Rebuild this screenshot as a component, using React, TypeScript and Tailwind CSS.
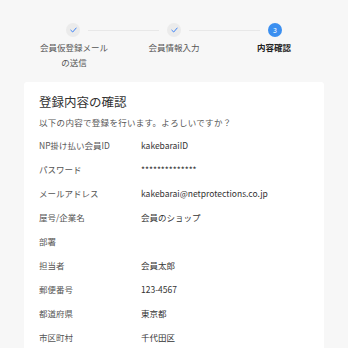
import React from "react";

const rows: [string, string][] = [
  ["NP掛け払い会員ID", "kakebaraiID"],
  ["パスワード", "**************"],
  ["メールアドレス", "kakebarai@netprotections.co.jp"],
  ["屋号/企業名", "会員のショップ"],
  ["部署", ""],
  ["担当者", "会員太郎"],
  ["郵便番号", "123-4567"],
  ["都道府県", "東京都"],
  ["市区町村", "千代田区"],
];

function Check() {
  return (
    <svg width="7" height="6" viewBox="0 0 7 6" fill="none">
      <path d="M0.8 3.2 L2.7 5 L6.2 1" stroke="#3b82f6" strokeWidth="1" strokeLinecap="round" strokeLinejoin="round" />
    </svg>
  );
}

export default function App() {
  return (
    <div
      className="w-[348px] h-[348px] overflow-hidden bg-[#f7f7f7]"
      style={{ fontFamily: '"Noto Sans CJK JP", "Noto Sans", sans-serif' }}
    >
      <div className="pt-[23px] px-[24px]">
        <div className="flex items-center px-[42px]">
          <div className="w-[14px] h-[14px] rounded-full bg-[#ebebeb] flex items-center justify-center">
            <Check />
          </div>
          <div className="flex-1 h-px bg-[#e8e8e8] mx-[8px]" />
          <div className="w-[14px] h-[14px] rounded-full bg-[#ebebeb] flex items-center justify-center">
            <Check />
          </div>
          <div className="flex-1 h-px bg-[#e8e8e8] mx-[8px]" />
          <div className="w-[14px] h-[14px] rounded-full bg-[#3b8ff0] flex items-center justify-center text-white text-[7px] leading-none">
            3
          </div>
        </div>
        <div className="grid grid-cols-3 mt-[3px] text-[8.5px] leading-[15px] text-center">
          <div className="text-[#555]">会員仮登録メール<br />の送信</div>
          <div className="text-[#555]">会員情報入力</div>
          <div className="text-[#222] font-bold">内容確認</div>
        </div>
      </div>
      <div className="mx-[24px] mt-[12px] bg-white rounded-[3px] px-[15px] pt-[11px] pb-[10px]">
        <div className="text-[12.5px] leading-[18px] text-[#333]">登録内容の確認</div>
        <div className="mt-[4px] text-[8.5px] leading-[14px] text-[#555] tracking-[0.3px]">
          以下の内容で登録を行います。よろしいですか？
        </div>
        <div className="mt-[4px]">
          {rows.map(([k, v]) => (
            <div key={k} className="flex h-[24px] items-center text-[8.5px]">
              <div className="w-[102px] text-[#555]">{k}</div>
              <div className="text-[#333]">{v}</div>
            </div>
          ))}
        </div>
      </div>
    </div>
  );
}
